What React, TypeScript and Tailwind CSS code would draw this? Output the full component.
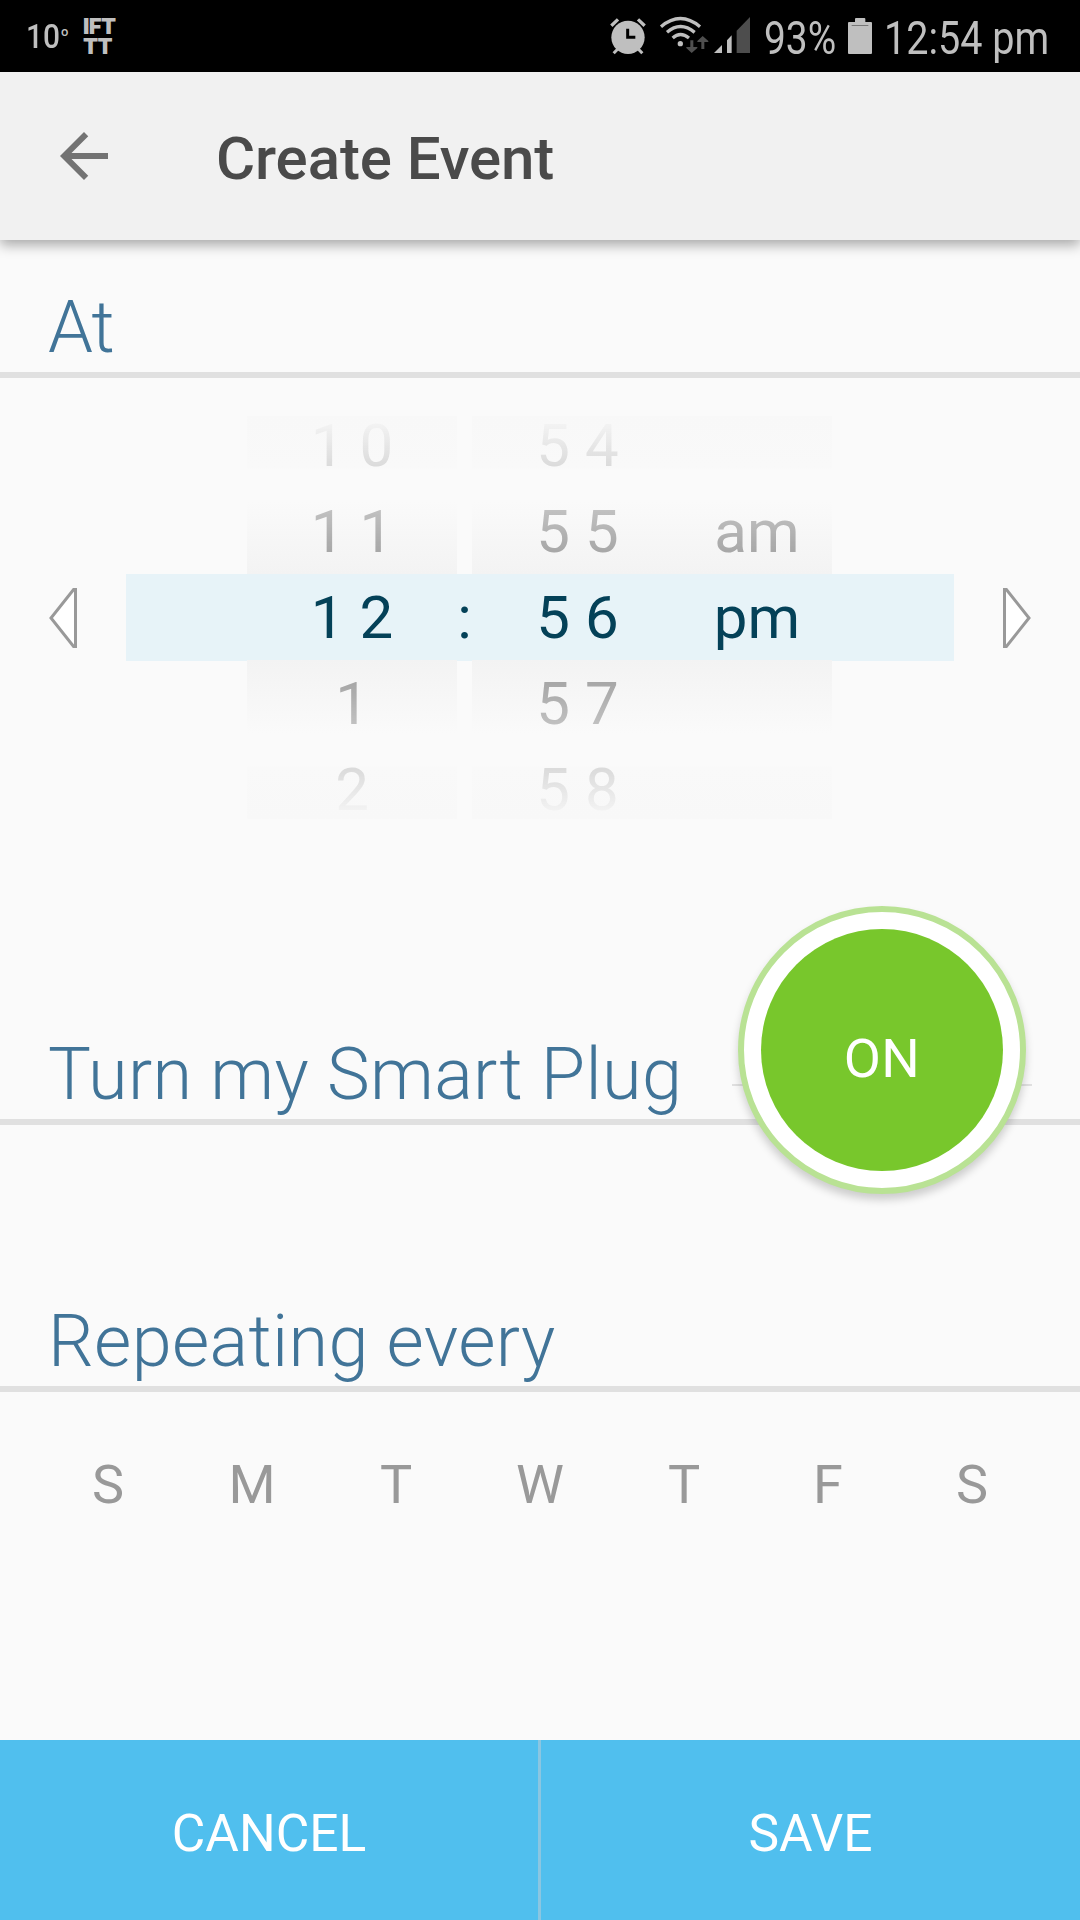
import React from "react";

const DAYS = ["S", "M", "T", "W", "T", "F", "S"];
const HOURS = ["1 0", "1 1", "1 2", "1", "2"];
const MINUTES = ["5 4", "5 5", "5 6", "5 7", "5 8"];
const PERIODS = ["", "am", "pm", "", ""];

function AlarmIcon() {
  return (
    <svg viewBox="60 0 114 216" className="h-[72px] w-[38px] shrink-0" stroke="#bfbfbf" fill="none">
      <circle cx="114" cy="112" r="50" fill="#bfbfbf" stroke="none" />
      <path d="M64 77 L84 58 M144 58 L164 77" strokeWidth="10" />
      <path d="M84 146 L71 160 M144 146 L157 160" strokeWidth="9" />
      <path d="M113 86 V112 H136" stroke="#000" strokeWidth="9" />
    </svg>
  );
}

function WifiIcon() {
  return (
    <svg viewBox="204 0 156 216" className="ml-2.5 h-[72px] w-[52px] shrink-0" stroke="#bfbfbf" fill="none">
      <path d="M213 80 Q271 31 330 80" strokeWidth="10" />
      <path d="M231 97 Q271 62 314 97" strokeWidth="10" />
      <path d="M248 114 Q271 93 297 114" strokeWidth="10" />
      <circle cx="271" cy="131" r="8" fill="#bfbfbf" stroke="none" />
      <path d="M301 121 h9 v20 h12 v3 l-17 15 l-16 -15 v-3 h12z" fill="#4f4f4f" stroke="none" />
      <path d="M334 147 h9 v-21 h12 v-3 l-17 -15 l-16 15 v3 h12z" fill="#4f4f4f" stroke="none" />
    </svg>
  );
}

function SignalIcon() {
  return (
    <svg viewBox="372 0 111 216" className="ml-1 h-[72px] w-[37px] shrink-0">
      <path d="M372 159 L396 135 V159Z M411 121 L425 106 V159 H411Z" fill="#bfbfbf" />
      <path d="M440 92 L480 51 V159 H440Z" fill="#4d4d4d" />
    </svg>
  );
}

function BatteryIcon() {
  return (
    <svg viewBox="774 0 72 216" className="h-[72px] w-6 shrink-0">
      <path
        d="M795 66 V57 q0 -3 3 -3 h25 q3 0 3 3 V66 h17 q3 0 3 3 V159 q0 3 -3 3 H777 q-3 0 -3 -3 V69 q0 -3 3 -3Z"
        fill="#bfbfbf"
      />
      <rect x="785" y="75" width="50" height="3" fill="#777" />
    </svg>
  );
}

function StatusBar() {
  return (
    <div className="flex h-[72px] items-center bg-black text-[#bfbfbf]">
      <div className="ml-[26px] flex w-[57px] items-start">
        <span className="w-[34px] origin-left scale-x-[0.88] text-[34px] leading-[48px] font-medium">10</span>
        <span className="mt-[7px] ml-px text-[13px] leading-[26px] font-medium">o</span>
      </div>
      <div className="-mt-px flex flex-col font-['Inter'] text-[22px] leading-5 font-black tracking-[-0.6px]">
        <span>IFT</span>
        <span>TT</span>
      </div>
      <div className="ml-auto flex w-[470px] items-center">
        <AlarmIcon />
        <WifiIcon />
        <SignalIcon />
        <div className="ml-[13px] w-[84px] pt-1">
          <div className="w-max origin-left scale-x-[0.845] text-[46px] leading-none">93%</div>
        </div>
        <BatteryIcon />
        <div className="ml-3 w-[190px] pt-1">
          <div className="w-max origin-left scale-x-[0.86] text-[46px] leading-none">12:54 pm</div>
        </div>
      </div>
    </div>
  );
}

function AppBar() {
  return (
    <header className="relative z-10 flex h-[168px] items-center bg-[#f1f1f1] pl-12 shadow-[0_5px_12px_rgba(0,0,0,0.33)]">
      <svg viewBox="0 0 24 24" className="size-[72px]" fill="#737373">
        <path d="M20 11H7.83l5.59-5.59L12 4l-8 8 8 8 1.41-1.41L7.83 13H20v-2z" />
      </svg>
      <h1 className="ml-24 pt-[5px] text-[60px] leading-[70px] font-medium tracking-[-0.1px] text-[#4a4a4a]">
        Create Event
      </h1>
    </header>
  );
}

function WheelColumn({ items, className }: { items: string[]; className: string }) {
  return (
    <div className={`flex h-[403px] flex-col justify-center overflow-hidden text-center text-[60px] ${className}`}>
      {items.map((item, i) => (
        <div key={i} className={`h-[86px] shrink-0 leading-[86px] ${i === 2 ? "text-[#044158]" : "text-[#999]"}`}>
          {item}
        </div>
      ))}
    </div>
  );
}

function Wheel({ children }: { children: React.ReactNode }) {
  return (
    <div className="relative bg-[linear-gradient(#f8f8f8_0px,#f9f9f9_52px,#fafafa_53px,#fafafa_85px,#f3f3f3_158px,transparent_158px,transparent_244px,#f3f3f3_244px,#fafafa_318px,#fafafa_350px,#f9f9f9_351px,#f8f8f8_403px)]">
      <div className="flex [mask-image:linear-gradient(transparent_0px,black_160px,black_243px,transparent_403px)]">
        {children}
      </div>
    </div>
  );
}

function TimePicker() {
  return (
    <div className="pt-[38px]">
      <div className="relative flex h-[403px] items-center pl-[49px]">
        <div className="absolute top-[158px] right-[126px] left-[126px] h-[87px] bg-[#e7f3f8]" />
        <svg viewBox="0 0 28 60" className="h-[60px] w-7" fill="#fff" stroke="#999" strokeWidth="3">
          <path d="M26.5 1.5 H24.6 L2 30 L24.6 58.5 H26.5Z" />
        </svg>
        <div className="ml-[170px] flex items-center">
          <Wheel>
            <WheelColumn items={HOURS} className="w-[210px]" />
          </Wheel>
          <div className="relative flex w-[15px] justify-center text-[60px] leading-[86px] text-[#044158]">:</div>
          <Wheel>
            <WheelColumn items={MINUTES} className="w-[211px]" />
            <WheelColumn items={PERIODS} className="w-[149px] pr-px" />
          </Wheel>
        </div>
        <svg viewBox="0 0 28 60" className="ml-[171px] h-[60px] w-7" fill="#fff" stroke="#999" strokeWidth="3">
          <path d="M1.5 1.5 H3.4 L26 30 L3.4 58.5 H1.5Z" />
        </svg>
      </div>
    </div>
  );
}

function SectionTitle({ title, className, children }: { title: string; className: string; children?: React.ReactNode }) {
  return (
    <div className={`relative flex items-end border-b-6 border-[#e0e0e0] pb-0.5 pl-12 ${className}`}>
      <h2 className="text-[72px] leading-[84px] font-light text-[#417498]">{title}</h2>
      {children}
    </div>
  );
}

function PowerToggle() {
  return (
    <div className="absolute top-[87px] right-12 flex w-[300px] justify-center">
      <div className="absolute top-[178px] h-0.5 w-full bg-[#e0e0e0]" />
      <button className="relative flex size-72 items-center justify-center rounded-full border-6 border-[#b9e294] bg-white shadow-[0_6px_9px_rgba(0,0,0,0.18)]">
        <span className="flex size-[242px] items-center justify-center rounded-full bg-[#78c72c] pt-[17px] text-[54px] leading-none text-white">
          ON
        </span>
      </button>
    </div>
  );
}

export default function App() {
  return (
    <div className="flex h-[1920px] w-[1080px] flex-col overflow-hidden bg-[#fafafa] font-['Roboto',sans-serif]">
      <StatusBar />
      <AppBar />
      <main className="flex-1">
        <SectionTitle title="At" className="h-[138px] tracking-[-0.8px]" />
        <TimePicker />
        <SectionTitle title="Turn my Smart Plug" className="h-[306px] tracking-[0.34px]">
          <PowerToggle />
        </SectionTitle>
        <SectionTitle title="Repeating every" className="h-[267px] tracking-[0.34px]" />
        <div className="grid h-[185px] grid-cols-7 items-center px-9 text-center text-[54px] leading-none text-[#999]">
          {DAYS.map((day, i) => (
            <span key={i}>{day}</span>
          ))}
        </div>
      </main>
      <footer className="flex h-[180px] bg-[#50bfee] text-[51.5px] text-white">
        <button className="w-[541px] border-r-3 border-[#8bc6e1] pt-[7px]">CANCEL</button>
        <button className="flex-1 pt-[7px]">SAVE</button>
      </footer>
    </div>
  );
}
